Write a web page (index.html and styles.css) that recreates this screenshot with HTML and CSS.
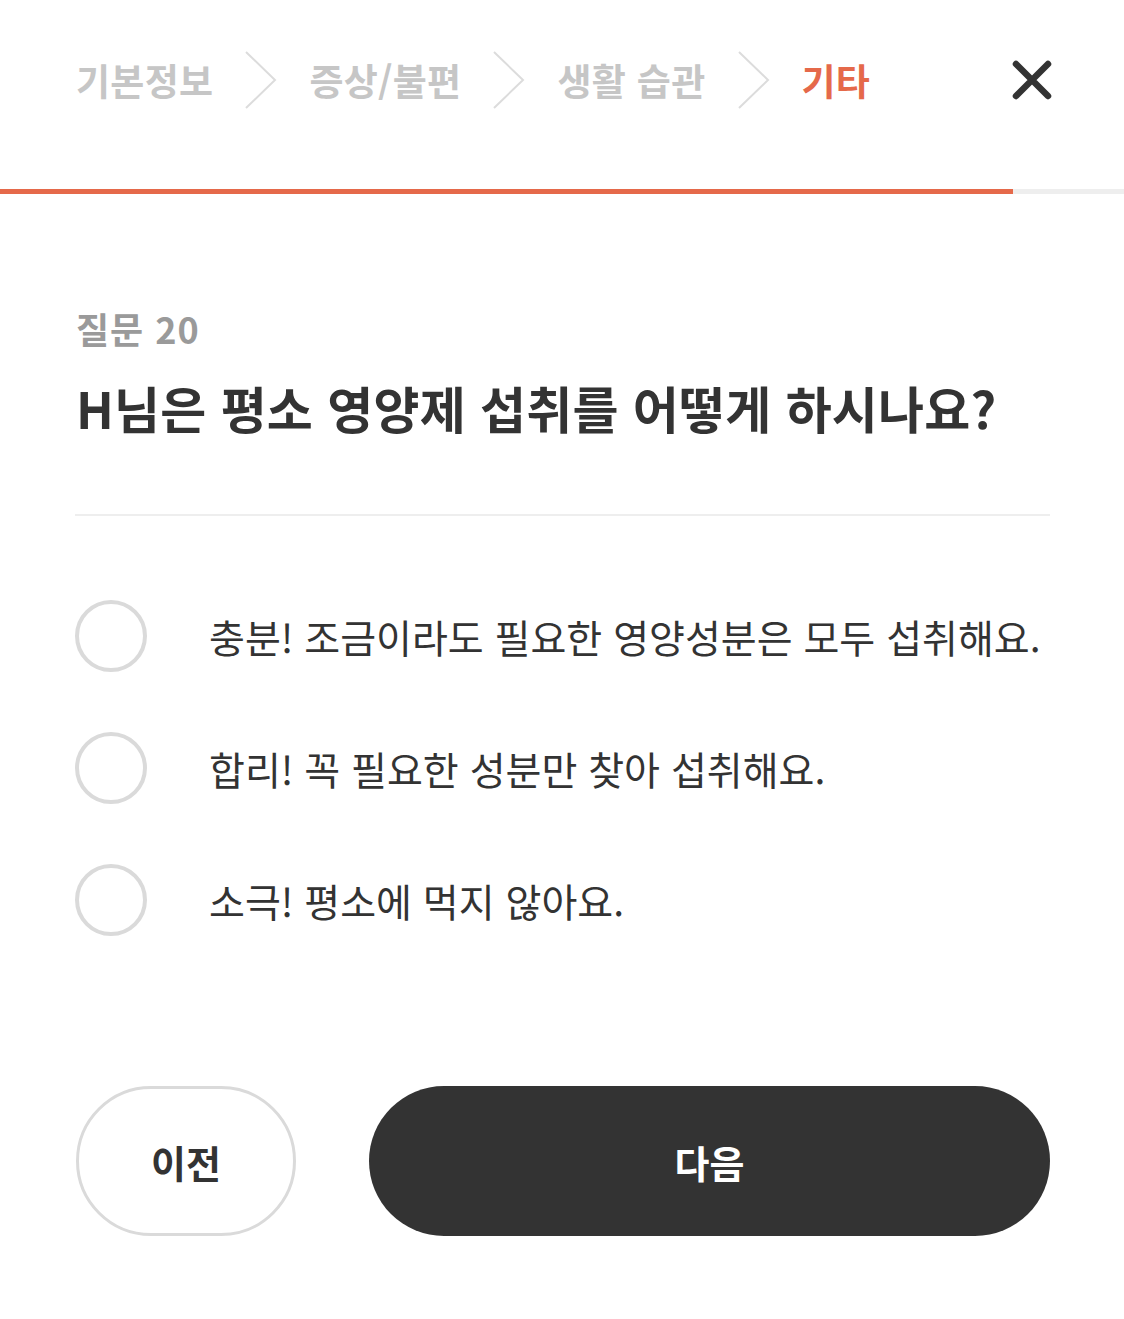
FILE: index.html
```html
<!DOCTYPE html>
<html lang="ko">
<head>
    <meta charset="UTF-8">
    <meta name="viewport" content="width=device-width, initial-scale=1.0">
    <title>설문 | 기타</title>
    <link rel="stylesheet" href="styles.css">
</head>
<body>
    <div class="survey">
        <div class="steps-header">
            <div class="steps">
                <span class="step">기본정보</span>
                <svg class="chevron" viewBox="0 0 32 58"><polyline points="1,1 30,29 1,57"/></svg>
                <span class="step">증상/불편</span>
                <svg class="chevron" viewBox="0 0 32 58"><polyline points="1,1 30,29 1,57"/></svg>
                <span class="step">생활 습관</span>
                <svg class="chevron" viewBox="0 0 32 58"><polyline points="1,1 30,29 1,57"/></svg>
                <span class="step active">기타</span>
            </div>
            <button class="close-btn" aria-label="닫기">
                <svg viewBox="0 0 40 40"><path d="M4 4 L36 36 M36 4 L4 36"/></svg>
            </button>
        </div>

        <div class="progress-container">
            <div class="progress-bar" style="width: 90.1%"></div>
        </div>

        <div class="question">
            <div class="question-counter">질문 20</div>
            <h1 class="question-text">H님은 평소 영양제 섭취를 어떻게 하시나요?</h1>
        </div>

        <div class="options">
            <label class="option">
                <input type="radio" name="answer" value="A">
                <span class="radio"></span>
                <span class="option-label">충분! 조금이라도 필요한 영양성분은 모두 섭취해요.</span>
            </label>
            <label class="option">
                <input type="radio" name="answer" value="B">
                <span class="radio"></span>
                <span class="option-label">합리! 꼭 필요한 성분만 찾아 섭취해요.</span>
            </label>
            <label class="option">
                <input type="radio" name="answer" value="C">
                <span class="radio"></span>
                <span class="option-label">소극! 평소에 먹지 않아요.</span>
            </label>
        </div>

        <div class="actions">
            <button class="prev-btn">이전</button>
            <button class="next-btn">다음</button>
        </div>
    </div>
</body>
</html>
```

FILE: styles.css
```css
* {
    box-sizing: border-box;
    margin: 0;
    padding: 0;
    font-family: "Noto Sans CJK KR", "Noto Sans", sans-serif;
}

body {
    background: #fff;
    color: #333;
}

.survey {
    width: 1124px;
    min-height: 1319px;
}

.steps-header {
    display: flex;
    align-items: center;
    justify-content: space-between;
    height: 160px;
    padding: 0 72px 0 76px;
}

.steps {
    display: flex;
    align-items: center;
    gap: 32px;
}

.step {
    font-size: 37px;
    font-weight: 700;
    color: #c6c6c6;
    letter-spacing: 0.3px;
}

.step.active {
    color: #e5694a;
}

.chevron {
    width: 32px;
    height: 58px;
}

.chevron polyline {
    fill: none;
    stroke: #dcdcdc;
    stroke-width: 2;
}

.close-btn {
    background: none;
    border: none;
    width: 40px;
    height: 40px;
    cursor: pointer;
}

.close-btn svg {
    width: 40px;
    height: 40px;
}

.close-btn path {
    stroke: #333;
    stroke-width: 6.5;
    stroke-linecap: round;
}

.progress-container {
    margin-top: 29px;
    height: 5px;
    background: #eeeeee;
}

.progress-bar {
    height: 100%;
    background: #e5694a;
}

.question {
    padding: 0 74px 0 76px;
    margin-top: 110px;
}

.question-counter {
    font-size: 36px;
    font-weight: 700;
    color: #9a9a9a;
    line-height: 48px;
    letter-spacing: 1px;
}

.question-text {
    margin-top: 25px;
    font-size: 50px;
    font-weight: 700;
    color: #333;
    line-height: 60px;
    letter-spacing: 0.2px;
}

.options {
    margin: 77px 74px 0 75px;
    padding-top: 54px;
    border-top: 2px solid #eeeeee;
}

.option {
    display: flex;
    align-items: center;
    gap: 62px;
    height: 132px;
    cursor: pointer;
}

.option input {
    position: absolute;
    opacity: 0;
}

.radio {
    flex: none;
    width: 72px;
    height: 72px;
    border: 4px solid #dadada;
    border-radius: 50%;
}

.option-label {
    font-size: 39px;
    font-weight: 400;
    color: #333;
    letter-spacing: 0;
}

.actions {
    display: flex;
    gap: 73px;
    margin: 120px 74px 0 76px;
}

.prev-btn,
.next-btn {
    height: 150px;
    border-radius: 75px;
    font-size: 38px;
    font-weight: 700;
    cursor: pointer;
}

.prev-btn {
    width: 220px;
    background: #fff;
    border: 3px solid #dadada;
    color: #333;
}

.next-btn {
    flex: 1;
    background: #333;
    border: none;
    color: #fff;
}
```
